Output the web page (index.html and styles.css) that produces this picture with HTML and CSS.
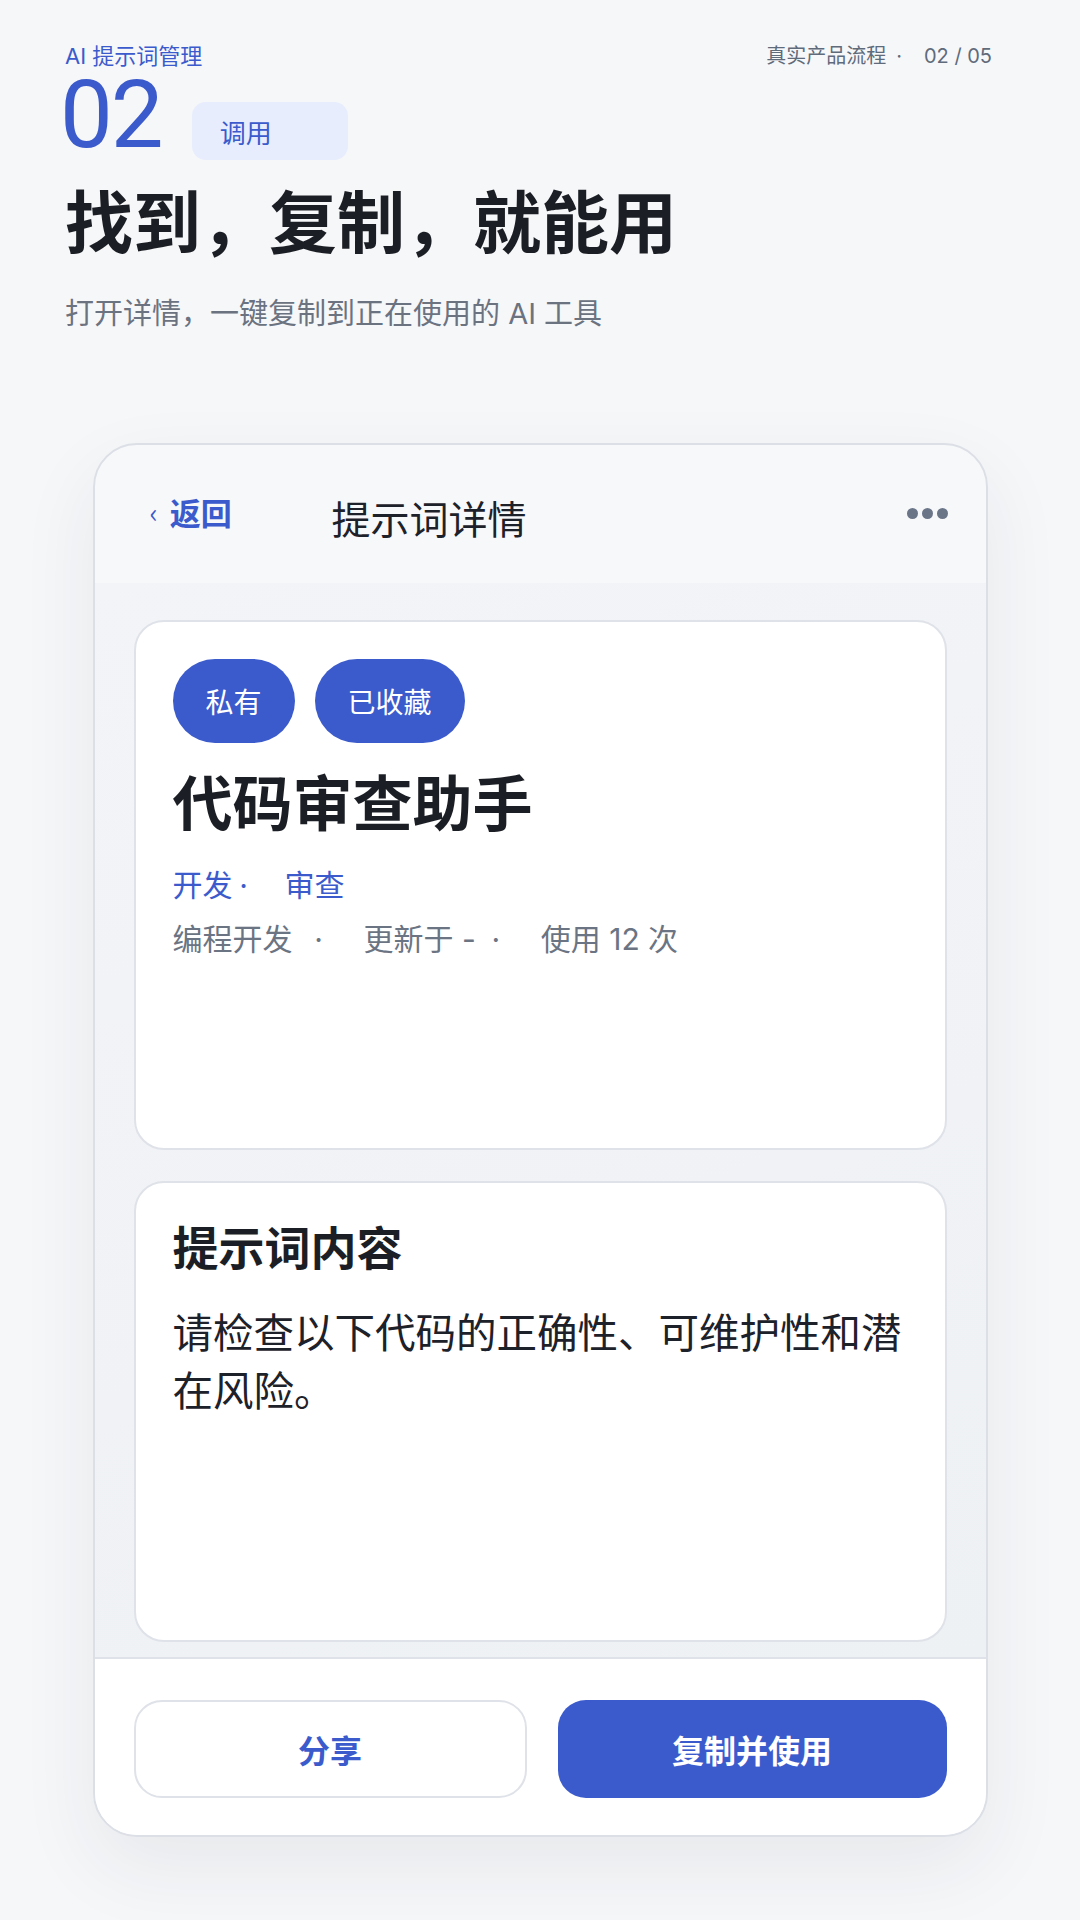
FILE: index.html
```html
<!DOCTYPE html>
<html lang="zh-CN">
<head>
    <meta charset="UTF-8">
    <meta name="viewport" content="width=1080, initial-scale=1.0">
    <title>AI 提示词管理 - 调用</title>
    <link rel="stylesheet" href="styles.css">
</head>
<body>
    <header class="intro">
        <div class="intro-top">
            <span class="brand">AI 提示词管理</span>
            <span class="progress">真实产品流程<span class="progress-sep">·</span>02 / 05</span>
        </div>
        <div class="step">
            <span class="step-num">02</span>
            <span class="step-tag">调用</span>
        </div>
        <h1>找到，复制，就能用</h1>
        <p class="lead">打开详情，一键复制到正在使用的 AI 工具</p>
    </header>

    <main class="phone">
        <div class="phone-bar">
            <a class="back" href="#"><span class="chev">‹</span>返回</a>
            <span class="bar-title">提示词详情</span>
            <span class="more"><i></i><i></i><i></i></span>
        </div>

        <div class="phone-body">
            <section class="card card-info">
                <div class="chips">
                    <span class="chip">私有</span>
                    <span class="chip">已收藏</span>
                </div>
                <h2>代码审查助手</h2>
                <div class="tags">
                    <span>开发</span><span class="tag-sep">·</span><span>审查</span>
                </div>
                <div class="meta">
                    <span>编程开发</span><span class="meta-sep">·</span><span class="meta-date">更新于 -</span><span class="meta-sep">·</span><span>使用 12 次</span>
                </div>
            </section>

            <section class="card card-content">
                <h3>提示词内容</h3>
                <p>请检查以下代码的正确性、可维护性和潜在风险。</p>
            </section>
        </div>

        <div class="phone-actions">
            <button class="btn btn-ghost" type="button">分享</button>
            <button class="btn btn-primary" type="button">复制并使用</button>
        </div>
    </main>
</body>
</html>
```

FILE: styles.css
```css
body {
    margin: 0;
    height: 1920px;
    background: #f6f7f9;
    color: #1d2129;
    font-family: "Inter", "Noto Sans CJK SC", sans-serif;
    overflow: hidden;
}
.intro {
    padding: 41px 88px 0 65px;
}
.intro-top {
    display: flex;
    justify-content: space-between;
    align-items: center;
    height: 30px;
}
.brand {
    font-size: 22px;
    line-height: 26px;
    color: #3b5bcc;
}
.progress {
    font-size: 20px;
    line-height: 26px;
    color: #5f6b7b;
}
.progress-sep {
    display: inline-block;
    margin: 0 22px 0 10px;
}
.step {
    display: flex;
    align-items: flex-end;
    height: 88px;
}
.step-num {
    font-family: "Roboto", sans-serif;
    font-size: 94px;
    line-height: 88px;
    color: #3b5bcc;
    margin-left: -5px;
    letter-spacing: -2px;
}
.step-tag {
    box-sizing: border-box;
    width: 156px;
    height: 58px;
    margin: 0 0 -1px 30px;
    padding-left: 28px;
    display: flex;
    align-items: center;
    border-radius: 14px;
    background: #e7edfd;
    color: #3b5bcc;
    font-size: 26px;
}
h1 {
    margin: 20px 0 0;
    font-size: 68px;
    line-height: 88px;
    font-weight: 700;
    color: #1b1e24;
}
.lead {
    margin: 27px 0 0;
    font-size: 29px;
    line-height: 40px;
    color: #6b7280;
}

.phone {
    box-sizing: border-box;
    width: 895px;
    height: 1394px;
    margin: 109px auto 0;
    display: flex;
    flex-direction: column;
    border: 2px solid #dcdfe6;
    border-radius: 44px;
    overflow: hidden;
    background: #f7f8fa;
    box-shadow: 0 30px 80px rgba(30, 40, 60, 0.07);
}
.phone-bar {
    flex: 0 0 auto;
    height: 138px;
    display: flex;
    align-items: center;
    padding: 0 38px 0 55px;
}
.back {
    width: 182px;
    margin-top: -6px;
    color: #3b5bcc;
    font-size: 31px;
    font-weight: 600;
    text-decoration: none;
}
.chev {
    display: inline-block;
    margin-right: 12px;
    font-family: "Noto Sans CJK SC", sans-serif;
    font-size: 27px;
    font-weight: 400;
    vertical-align: 2px;
}
.bar-title {
    flex: 1;
    padding-top: 6px;
    font-size: 39px;
    color: #1d2129;
}
.more {
    display: flex;
    gap: 4px;
    margin-top: -2px;
}
.more i {
    width: 11px;
    height: 11px;
    border-radius: 50%;
    background: #6b7588;
}

.phone-body {
    flex: 1;
    display: flex;
    flex-direction: column;
    gap: 31px;
    padding: 37px 39px 15px;
    background: linear-gradient(160deg, #f3f4f8 0%, #f0f2f6 60%, #eef1f4 100%);
}
.card {
    box-sizing: border-box;
    padding: 37px 37px;
    background: #fff;
    border: 2px solid #dfe2e8;
    border-radius: 30px;
}
.card-info {
    height: 530px;
}
.card-content {
    flex: 1;
}
.chips {
    display: flex;
    gap: 20px;
}
.chip {
    height: 84px;
    padding: 0 33px;
    display: flex;
    align-items: center;
    border-radius: 42px;
    background: #3b5bcc;
    color: #fff;
    font-size: 28px;
}
.card h2 {
    margin: 24px 0 0;
    font-size: 60px;
    line-height: 75px;
    font-weight: 700;
    color: #1b1e24;
}
.tags {
    margin-top: 22px;
    font-size: 30px;
    line-height: 42px;
    color: #3b5bcc;
}
.tag-sep {
    display: inline-block;
    width: 10px;
    text-align: center;
    margin: 0 36px 0 6px;
}
.meta {
    margin-top: 12px;
    font-size: 30px;
    line-height: 42px;
    color: #6b7483;
}
.meta-sep {
    display: inline-block;
    width: 10px;
    text-align: center;
    margin: 0 40px 0 21px;
}
.meta-date {
    margin-right: -6px;
}
.card h3 {
    margin: 0;
    font-size: 46px;
    line-height: 57px;
    font-weight: 700;
    color: #1b1e24;
}
.card-content p {
    margin: 28px 0 0;
    font-size: 40.5px;
    line-height: 58px;
    color: #1d2129;
}

.phone-actions {
    flex: 0 0 auto;
    display: flex;
    gap: 31px;
    padding: 41px 39px 37px;
    background: #fff;
    border-top: 2px solid #dfe2e8;
}
.btn {
    flex: 1;
    height: 98px;
    border-radius: 28px;
    font-family: inherit;
    font-size: 32px;
    font-weight: 700;
    cursor: pointer;
}
.btn-ghost {
    background: #fff;
    border: 2px solid #dfe2e8;
    color: #3b5bcc;
}
.btn-primary {
    background: #3b5bcc;
    border: none;
    color: #fff;
}
```
